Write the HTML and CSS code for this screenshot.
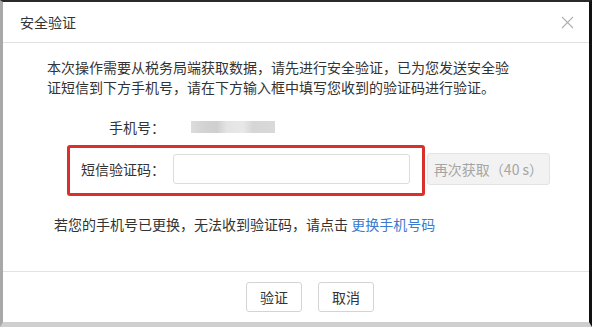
FILE: index.html
```html
<!DOCTYPE html>
<html lang="zh-CN">
<head>
  <meta charset="UTF-8">
  <title>安全验证</title>
  <link rel="stylesheet" href="styles.css">
</head>
<body>
  <div class="backdrop">
    <div class="dialog">
      <div class="dialog-header">
        <span class="dialog-title">安全验证</span>
        <span class="close">
          <svg width="13" height="13" viewBox="0 0 13 13"><path d="M1 1L12 12M12 1L1 12" stroke="#b0b0b0" stroke-width="1.1" fill="none"/></svg>
        </span>
      </div>
      <div class="dialog-body">
        <p class="intro">本次操作需要从税务局端获取数据，请先进行安全验证，已为您发送安全验证短信到下方手机号，请在下方输入框中填写您收到的验证码进行验证。</p>
        <div class="row phone-row">
          <label class="label">手机号：</label>
          <span class="masked"></span>
        </div>
        <div class="code-row">
          <div class="highlight">
            <label class="label">短信验证码：</label>
            <input type="text" class="code-input">
          </div>
          <button class="resend" disabled>再次获取（40 s）</button>
        </div>
        <p class="note">若您的手机号已更换，无法收到验证码，请点击 <a href="#" class="link">更换手机号码</a></p>
      </div>
      <div class="dialog-footer">
        <button class="btn">验证</button>
        <button class="btn">取消</button>
      </div>
    </div>
  </div>
</body>
</html>
```

FILE: styles.css
```css
body {
  margin: 0;
  font-family: "Noto Sans CJK SC", "Noto Sans", sans-serif;
  color: #333;
  background: #c9c9c9;
}
.backdrop {
  width: 592px;
  height: 327px;
  box-sizing: border-box;
  border-top: 2px solid #2a2a2a;
  border-left: 3px solid #a8a8a8;
  border-right: 3px solid #111;
  border-bottom: 5px solid #cfcfcf;
}
.dialog {
  width: 586px;
  height: 320px;
  background: #fff;
  display: flex;
  flex-direction: column;
}
.dialog-header {
  height: 40px;
  border-bottom: 1px solid #e2e2e2;
  display: flex;
  align-items: center;
  justify-content: space-between;
  padding: 0 15px 0 17px;
}
.dialog-title {
  font-size: 14px;
}
.close {
  display: flex;
}
.dialog-body {
  flex: 1;
  padding: 14px 0 0 44px;
  font-size: 14px;
}
.intro {
  margin: 0;
  width: 475px;
  line-height: 20px;
}
.row {
  display: flex;
  align-items: center;
}
.phone-row {
  margin: 20px 0 0 32px;
  height: 20px;
}
.label {
  width: 86px;
  text-align: right;
  white-space: nowrap;
  font-size: 14px;
  flex-shrink: 0;
}
.masked {
  margin-left: 26px;
  width: 84px;
  height: 12px;
  background: linear-gradient(90deg, #dcdcdc 0, #d2d2d2 14px, #cfcfcf 26px, #e4e4e4 36px, #e8e8e8 52px, #d6d6d6 62px, #d9d9d9 84px);
}
.code-row {
  display: flex;
  align-items: center;
  margin: 8px 0 0 20px;
}
.highlight {
  display: flex;
  align-items: center;
  width: 358px;
  height: 51px;
  box-sizing: border-box;
  border: 3px solid #d9302c;
  border-radius: 3px;
  padding: 0 12px 3px 9px;
}
.code-input {
  margin-left: 8px;
  width: 237px;
  height: 30px;
  box-sizing: border-box;
  border: 1px solid #dcdcdc;
  border-radius: 3px;
  padding: 0 8px;
  font: inherit;
}
.resend {
  margin: 0 0 3px 2px;
  width: 123px;
  height: 32px;
  background: #f2f2f2;
  border: 1px solid #e3e3e3;
  border-radius: 3px;
  color: #a5a5a5;
  font-family: inherit;
  font-size: 14px;
  padding: 0;
}
.note {
  margin: 18px 0 0 7px;
  line-height: 20px;
}
.link {
  color: #3a7bd0;
  text-decoration: none;
}
.dialog-footer {
  height: 51px;
  border-top: 1px solid #e2e2e2;
  display: flex;
  justify-content: center;
  gap: 16px;
  padding: 10px 0 0 28px;
  box-sizing: border-box;
}
.btn {
  height: 30px;
  padding: 0 13px;
  background: #fff;
  border: 1px solid #d4d4d4;
  border-radius: 3px;
  font-family: inherit;
  font-size: 14px;
  color: #333;
}
```
